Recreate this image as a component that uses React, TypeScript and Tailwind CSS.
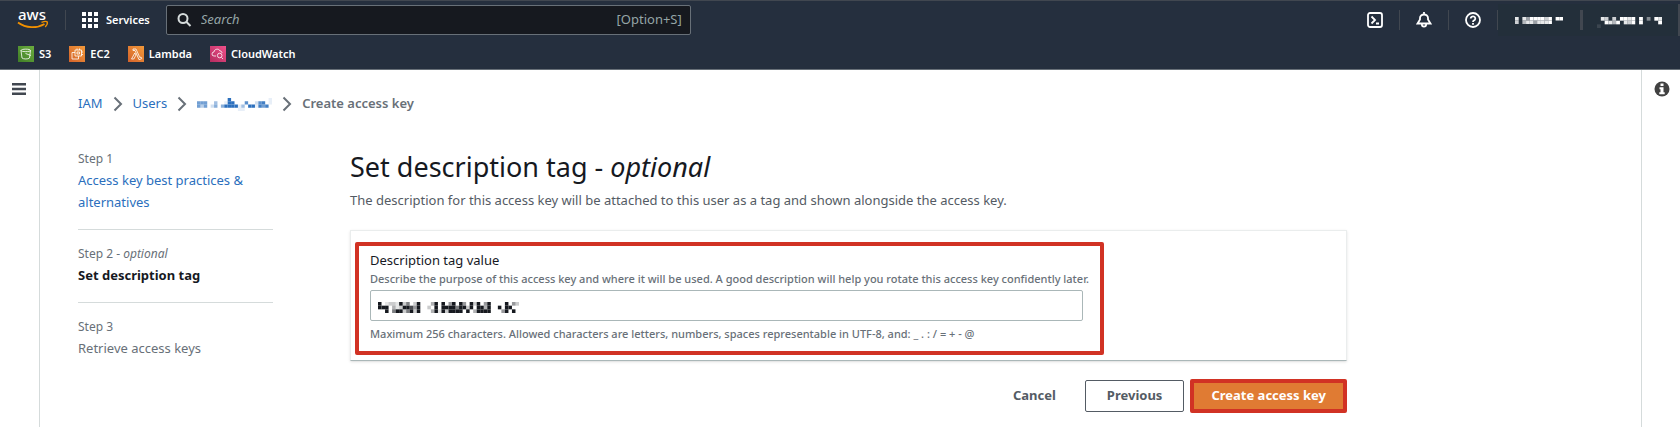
import { clsx } from 'clsx';
import { ReactNode } from 'react';

type Mosaic = { rows: string[]; width: number; height: number; className?: string };

// each character is the opacity of a block in ninths, a dot is empty
const MASKED_USER = ['.........9...........1', '666..4..199...7..278.1', '636.25.5999914.991868.', '............11........'];
const MASKED_REGION = ['8.85999979.99', '7.68858889...'];
const MASKED_ACCOUNT = ['.87.7.9989.9.4.98', '..9869.879.9....9', '1................'];
const MASKED_VALUE = [
    '9.1221925.29...39.9.49.94.929.49....9.42',
    '999.31299749..2.9.999959929.9939..9.99..',
    '..9.59925929...391929999.9.39999...49.9.',
];

const MosaicText = ({ rows, width, height, className }: Mosaic) => (
    <svg
        className={className}
        width={width}
        height={height}
        viewBox={`0 0 ${rows[0].length} ${rows.length}`}
        preserveAspectRatio="none"
        fill="currentColor"
        aria-hidden="true"
    >
        {rows.map((row, y) =>
            row
                .split('')
                .map((cell, x) =>
                    cell === '.' ? null : (
                        <rect key={`${x}-${y}`} x={x} y={y} width="1" height="1" opacity={Number(cell) / 9} />
                    ),
                ),
        )}
    </svg>
);

const AwsLogo = () => (
    <svg width="32" height="34" fill="none">
        <text x="1" y="17" fill="#fff" fontFamily="Noto Sans, sans-serif" fontSize="15" fontWeight="500">
            aws
        </text>
        <path d="M1 19.500C9 25.500 20 25.500 27.500 21" stroke="#f29100" strokeWidth="1.800" />
        <path
            d="M24.500 19.300C27 18.300 29.800 18.300 30.300 19C30.600 20 29.600 22.500 28.200 24"
            stroke="#f29100"
            strokeWidth="1.300"
        />
    </svg>
);

const FAVORITES = [
    {
        name: 'S3',
        color: 'from-[#3f7d27] to-[#6cae3e]',
        icon: <path d="M3 4.500c0-1.800 9.500-1.800 9.500 0l-1 7.500c-1.500 1.300-6 1.300-7.500 0zM3 4.500c0 1.500 9.500 1.500 9.500 0M7.500 7.500L13 9.500" />,
    },
    {
        name: 'EC2',
        color: 'from-[#d3622b] to-[#f39a3a]',
        icon: <path d="M6 4h6.500v6H6zM6 6.500H3V13h6.500v-3M8 6h2.500v2H8zM8 2.500V4M10.500 2.500V4M12.500 6H14M12.500 8.500H14" />,
    },
    {
        name: 'Lambda',
        color: 'from-[#d3622b] to-[#f39a3a]',
        icon: <path d="M5 3h3l3.800 8.500 1.200-.5.700 1.700-2.700 1L7 4.500H5zM6.800 7l-3.300 6h2.300l2.200-4z" />,
    },
    {
        name: 'CloudWatch',
        color: 'from-[#b32b5f] to-[#f0508a]',
        icon: <path d="M6 10H4a2 2 0 010-4c0-3 5-4 6-1 1.500 0 2 1 2 2M11.500 11.500l1.500 1.500M12 9.500a2.300 2.300 0 11-4.600 0 2.300 2.300 0 014.600 0" />,
    },
];

const Divider = () => <span className="h-5 w-px bg-[#414750]" />;

const Header = () => (
    <header className="border-t border-b border-t-[#414750] border-b-[#687078] bg-[#252f3e] text-white">
        <div className="flex h-[38px] items-center pl-[17px]">
            <a href="#home" aria-label="aws" className="mr-4">
                <AwsLogo />
            </a>
            <Divider />
            <button className="ml-4 flex items-center gap-2 text-[11px] font-semibold">
                <svg width="16" height="16" fill="currentColor">
                    {[0, 6, 12].map((y) => [0, 6, 12].map((x) => <rect key={`${x}-${y}`} x={x} y={y} width="4" height="4" />))}
                </svg>
                Services
            </button>
            <label className="ml-4 flex h-[30px] w-[525px] items-center gap-2 rounded-xs border border-[#687078] bg-[#16191f] px-2 text-[13px]">
                <svg width="18" height="18" fill="none" stroke="#d5dbdb" strokeWidth="2">
                    <circle cx="8" cy="7.500" r="4.500" />
                    <path d="M11 10.500l4.500 4.500" />
                </svg>
                <input
                    aria-label="Search"
                    placeholder="Search"
                    className="min-w-0 flex-1 outline-none placeholder:text-[#95a5a6] placeholder:italic"
                />
                <span className="text-[#95a5a6]">[Option+S]</span>
            </label>
            <div className="ml-auto flex items-center">
                <button aria-label="CloudShell" className="mr-4">
                    <svg width="16" height="16" fill="none" stroke="currentColor" strokeWidth="1.800">
                        <rect x="1" y="1" width="14" height="14" rx="2" />
                        <path d="M4.500 4.500L8 8l-3.500 3.500M9 11.500h3" />
                    </svg>
                </button>
                <Divider />
                <button aria-label="Notifications" className="mx-4">
                    <svg width="16" height="16" fill="none" stroke="currentColor" strokeWidth="1.800">
                        <path d="M8 0v2M1.500 11.500h13l-2.500-4V6a4 3.500 0 00-8 0v1.500z" />
                        <path d="M5.800 12a2.200 2.600 0 004.400 0" />
                    </svg>
                </button>
                <Divider />
                <button aria-label="Help" className="mx-4">
                    <svg width="16" height="16" fill="none" stroke="currentColor" strokeWidth="1.800">
                        <circle cx="8" cy="8" r="7" />
                        <path d="M5.700 6.500a2.300 2.200 0 114 1.500C8.800 8.600 8 8.700 8 10M8 11v1.800" />
                    </svg>
                </button>
                <Divider />
                <div className="flex h-8 items-center bg-[#232f3a]">
                    <button aria-label="Region" className="mx-[17px]">
                        <MosaicText rows={MASKED_REGION} width={48} height={7} />
                    </button>
                    <span className="h-5 w-[3px] bg-[#414750]" />
                    <button aria-label="Account" className="mr-4 ml-3.5 pt-1">
                        <MosaicText rows={MASKED_ACCOUNT} width={65} height={11} />
                    </button>
                    <span className="h-8 w-0.5 bg-[#414750]" />
                </div>
            </div>
        </div>
        <nav className="flex h-[30px] items-center gap-[18px] px-[18px] text-[11px] font-semibold">
            {FAVORITES.map(({ name, color, icon }) => (
                <a key={name} href={`#${name}`} className="flex items-center gap-[5px]">
                    <span className={clsx('size-4 bg-linear-45', color)}>
                        <svg width="16" height="16" fill="none" stroke="#fff" strokeWidth="0.800">
                            {icon}
                        </svg>
                    </span>
                    {name}
                </a>
            ))}
        </nav>
    </header>
);

const Chevron = () => (
    <svg width="10" height="16" fill="none" stroke="#687078" strokeWidth="2">
        <path d="M1.500 1.500L8 8l-6.500 6.500" />
    </svg>
);

const Breadcrumb = () => (
    <nav className="flex h-5 items-center gap-2.5 text-[13px] text-[#2b6fbd]">
        <a href="#iam">IAM</a>
        <Chevron />
        <a href="#users">Users</a>
        <Chevron />
        <a href="#user" aria-label="User">
            <MosaicText rows={MASKED_USER} width={75} height={13} />
        </a>
        <Chevron />
        <span className="font-semibold text-[#687078]">Create access key</span>
    </nav>
);

const Step = ({ label, children }: { label: ReactNode; children: ReactNode }) => (
    <li className="border-b border-[#d5dbdb] pt-3.5 pb-4 first:pt-0 last:border-0">
        <div className="text-[12px] leading-5 text-[#687078]">{label}</div>
        <div className="text-[13px] leading-[22px]">{children}</div>
    </li>
);

const App = () => {
    return (
        <div className="flex min-h-screen flex-col bg-white font-['Noto_Sans',sans-serif] text-[#16191f]">
            <Header />
            <div className="flex flex-1">
                <aside className="w-10 shrink-0 border-r border-[#d5dbdb] pt-3 pl-3">
                    <button aria-label="Menu" className="block">
                        <svg width="14" height="14" fill="none" stroke="#414750" strokeWidth="2.400">
                            <path d="M0 2.200h14M0 7h14M0 11.800h14" />
                        </svg>
                    </button>
                </aside>
                <main className="flex-1 px-[38px] pt-6">
                    <Breadcrumb />
                    <div className="mt-[35px] flex">
                        <ol className="mr-[77px] w-[195px] shrink-0">
                            <Step label="Step 1">
                                <a href="#step1" className="text-[#2b6fbd]">
                                    Access key best practices &amp; alternatives
                                </a>
                            </Step>
                            <Step
                                label={
                                    <>
                                        Step 2 - <i>optional</i>
                                    </>
                                }
                            >
                                <b>Set description tag</b>
                            </Step>
                            <Step label="Step 3">
                                <span className="text-[#687078]">Retrieve access keys</span>
                            </Step>
                        </ol>
                        <div className="max-w-[997px] flex-1">
                            <h1 className="text-[27px] leading-9">
                                Set description tag - <i>optional</i>
                            </h1>
                            <p className="mt-1 text-[13px] leading-[22px] text-[#545b64]">
                                The description for this access key will be attached to this user as a tag and shown
                                alongside the access key.
                            </p>
                            <section className="mt-[19px] border border-[#eaeded] border-b-[#aab7b8] px-1 pt-[11px] pb-[5px] shadow-sm">
                                <div className="max-w-[749px] rounded-xs border-4 border-[#d13224] pt-1 pr-0.5 pb-2 pl-[11px]">
                                    <label htmlFor="tag" className="block text-[13px] leading-5">
                                        Description tag value
                                    </label>
                                    <p className="text-[11px] leading-[18px] font-medium text-[#687078]">
                                        Describe the purpose of this access key and where it will be used. A good
                                        description will help you rotate this access key confidently later.
                                    </p>
                                    <div className="relative mt-0.5 max-w-[713px]">
                                        <input
                                            id="tag"
                                            className="block h-[31px] w-full rounded-xs border border-[#aab7b8] px-2"
                                        />
                                        <MosaicText
                                            rows={MASKED_VALUE}
                                            width={141}
                                            height={11}
                                            className="pointer-events-none absolute top-3 left-2"
                                        />
                                    </div>
                                    <p className="mt-1 text-[11px] leading-[18px] font-medium text-[#687078]">
                                        Maximum 256 characters. Allowed characters are letters, numbers, spaces
                                        representable in UTF-8, and: _ . : / = + - @
                                    </p>
                                </div>
                            </section>
                            <div className="mt-[18px] flex items-center justify-end gap-1.5 text-[13px] font-bold text-[#545b64]">
                                <button className="px-[23px]">Cancel</button>
                                <button className="h-8 rounded-xs border border-[#545b64] px-[21px]">Previous</button>
                                <button className="h-[34px] rounded-xs border-4 border-[#d13224] bg-[#e07b33] px-[17px] text-white">
                                    Create access key
                                </button>
                            </div>
                        </div>
                    </div>
                </main>
                <aside className="w-[39px] shrink-0 border-l border-[#d5dbdb] pt-[11px] pl-3">
                    <button aria-label="Info" className="block">
                        <svg width="16" height="16">
                            <circle cx="8" cy="8" r="7.500" fill="#414141" />
                            <path d="M6.500 2.500h3v2.500h-3zM5.500 6.300h4v5h1.200v2H5.300v-2h1.200v-3h-1z" fill="#fff" />
                        </svg>
                    </button>
                </aside>
            </div>
        </div>
    );
};

export default App;
